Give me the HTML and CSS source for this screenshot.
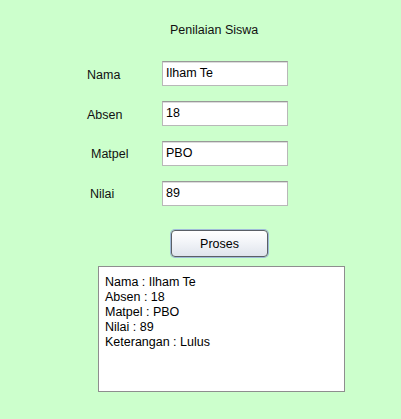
FILE: index.html
```html
<!DOCTYPE html>
<html>
<head>
<meta charset="utf-8">
<link rel="stylesheet" href="styles.css">
</head>
<body>
<div class="app">
  <div class="title">Penilaian Siswa</div>
  <div class="form">
    <div class="row row-nama"><span class="label">Nama</span><div class="field">Ilham Te</div></div>
    <div class="row row-absen"><span class="label">Absen</span><div class="field">18</div></div>
    <div class="row row-matpel"><span class="label">Matpel</span><div class="field">PBO</div></div>
    <div class="row row-nilai"><span class="label">Nilai</span><div class="field">89</div></div>
  </div>
  <div class="actions"><button class="btn">Proses</button></div>
  <div class="output">
    <div class="line">Nama : Ilham Te</div>
    <div class="line">Absen : 18</div>
    <div class="line">Matpel : PBO</div>
    <div class="line">Nilai : 89</div>
    <div class="line">Keterangan : Lulus</div>
  </div>
</div>
</body>
</html>
```
FILE: styles.css
```css
html, body {
  margin: 0;
  padding: 0;
}
body {
  background: #ccffcc;
  font-family: "Liberation Sans", Arial, sans-serif;
  font-size: 12.5px;
  color: #111;
}
.app {
  width: 401px;
  height: 419px;
  background: #ccffcc;
  overflow: hidden;
}
.title {
  padding-top: 23px;
  margin-left: 170px;
  line-height: 15px;
}
.form {
  margin-top: 23px;
  display: flex;
  flex-direction: column;
  gap: 15px;
}
.row {
  display: flex;
  align-items: center;
  padding-left: 87px;
  height: 25px;
}
.label {
  width: 75px;
  line-height: 15px;
  padding-top: 1px;
}
.row-nama .label, .row-absen .label {
  padding-top: 4px;
}
.row-matpel .label {
  padding-left: 4px;
  width: 71px;
}
.row-nilai .label {
  padding-left: 3px;
  width: 72px;
}
.field {
  box-sizing: border-box;
  width: 126px;
  height: 25px;
  background: #fff;
  border: 1px solid #b8b8b8;
  border-top-color: #999;
  box-shadow: inset 0 1px 0 #dcdcdc;
  padding: 0 3px;
  line-height: 23px;
  color: #000;
}
.actions {
  margin-top: 24px;
  padding-left: 171px;
}
.btn {
  box-sizing: border-box;
  width: 97px;
  height: 27px;
  margin: 0;
  padding: 0;
  font-family: "Liberation Sans", Arial, sans-serif;
  font-size: 12.5px;
  color: #000;
  border: 1px solid #5a5f66;
  border-radius: 4px;
  background: linear-gradient(#ffffff 0%, #f2f4f8 45%, #dfe4ec 100%);
  box-shadow: 0 0 0 1px #9fbbd8;
}
.output {
  box-sizing: border-box;
  margin-top: 9px;
  margin-left: 98px;
  width: 247px;
  height: 126px;
  background: #fff;
  border: 1px solid #8e8e8e;
  padding: 8px 6px;
  color: #000;
}
.line {
  line-height: 15px;
}
```
